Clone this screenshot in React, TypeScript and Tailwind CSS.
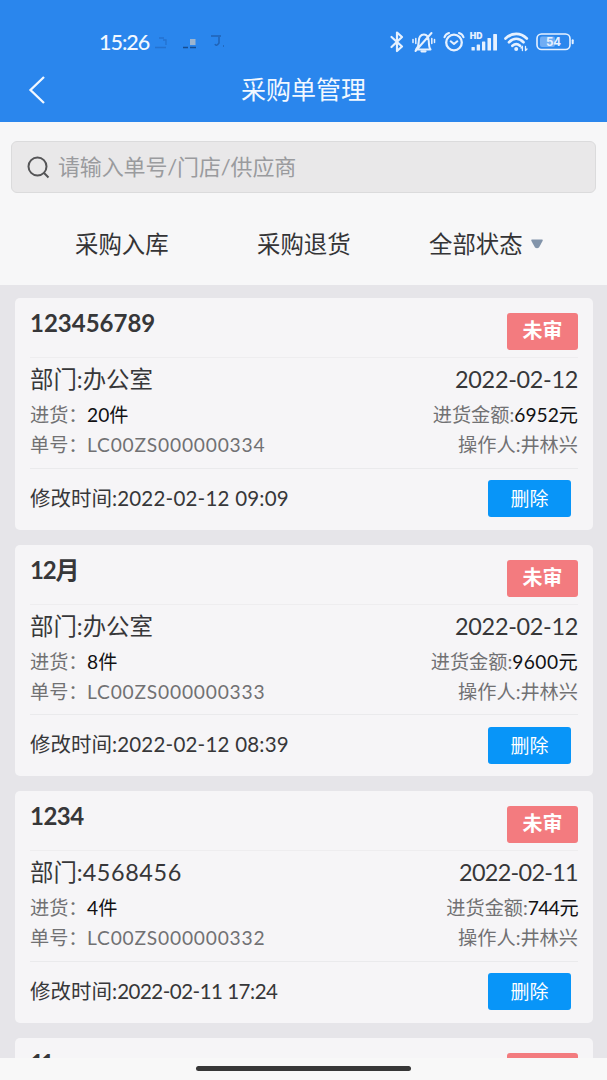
import React from "react";

type Order = {
  name: string;
  nameClass: string;
  department: string;
  departmentClass: string;
  date: string;
  dateClass: string;
  count: string;
  amount: string;
  amountClass: string;
  code: string;
  modified: string;
  modifiedClass: string;
};

const orders: Order[] = [
  { name: "123456789", nameClass: "tracking-normal", department: "办公室", departmentClass: "tracking-normal", date: "2022-02-12", dateClass: "tracking-[-0.3px]", count: "20件", amount: "6952元", amountClass: "tracking-normal", code: "LC00ZS000000334", modified: "2022-02-12 09:09", modifiedClass: "tracking-[0.22px]" },
  { name: "12月", nameClass: "tracking-[-1.2px]", department: "办公室", departmentClass: "tracking-normal", date: "2022-02-12", dateClass: "tracking-[-0.3px]", count: "8件", amount: "9600元", amountClass: "tracking-[0.4px]", code: "LC00ZS000000333", modified: "2022-02-12 08:39", modifiedClass: "tracking-[0.22px]" },
  { name: "1234", nameClass: "tracking-[-0.5px]", department: "4568456", departmentClass: "tracking-[0.6px]", date: "2022-02-11", dateClass: "tracking-[-0.7px]", count: "4件", amount: "744元", amountClass: "tracking-[-0.6px]", code: "LC00ZS000000332", modified: "2022-02-11 17:24", modifiedClass: "tracking-[-0.5px]" },
  { name: "11", nameClass: "tracking-[-3.5px]", department: "办公室", departmentClass: "tracking-normal", date: "2022-02-11", dateClass: "tracking-[-0.7px]", count: "2件", amount: "120元", amountClass: "tracking-normal", code: "LC00ZS000000331", modified: "2022-02-11 16:50", modifiedClass: "tracking-[-0.5px]" },
];

function StatusIcons() {
  return (
    <svg className="h-[26px] w-[190px]" viewBox="388 29 190 26" fill="none" stroke="#e6f1ff" strokeWidth="2" strokeLinecap="round" strokeLinejoin="round">
      <path d="M391.5 37 L402 46.5 L397 51 V32.5 L402 37 L391.5 47" strokeWidth="2.2" />
      <path d="M416 49.5 H430.5 C428.8 47.5 429 45 428.8 41.5 C428.5 36.5 426.5 34.5 424 34.5 C420.5 34.5 418.7 37.5 418.7 42 C418.7 45 418 47.5 416 49.5 M415.5 51 L431.5 33" strokeWidth="2" />
      <path d="M421.5 51.3 H425.5" strokeWidth="2.2" />
      <path d="M415.8 38.5 V43.5 M413 39.5 V42.5 M431.8 38.5 V43.5 M434.5 39.5 V42.5" strokeWidth="1.5" />
      <circle cx="454" cy="42.5" r="7.8" strokeWidth="2.3" />
      <path d="M450.7 41.3 L454 44 L457.3 41.3 M444.5 37.2 Q445.5 34 449 33 M463.5 37.2 Q462.5 34 459 33" strokeWidth="2.1" />
      <g fill="#e6f1ff" stroke="none">
        <rect x="471.5" y="47" width="3.3" height="3.5" rx="0.6" />
        <rect x="476.7" y="44.5" width="3.3" height="6" rx="0.6" />
        <rect x="482" y="41.5" width="3.3" height="9" rx="0.6" />
        <rect x="487.5" y="38" width="3.5" height="12.5" rx="0.6" />
        <rect x="493.2" y="34" width="3.8" height="16.5" rx="0.6" />
        <text x="469.8" y="39.2" fontSize="8.6" fontWeight="900" fontFamily="Inter, sans-serif">HD</text>
      </g>
      <path d="M505.5 38.5 C512 32.3 520.5 32.3 526.8 38.5 M509 42.3 C513.5 37.8 519 37.8 523.5 42.3 M512.4 45.8 C515 43.6 517.5 43.6 520 45.8" strokeWidth="2.7" />
      <circle cx="516.2" cy="49" r="2" fill="#e6f1ff" stroke="none" />
      <path d="M522.4 50.5 V46.5 M521 48 L522.4 46.5 M525.5 46.5 V50.5 M527 49 L525.5 50.5" strokeWidth="1.3" />
      <rect x="537" y="34" width="33" height="15.5" rx="4.5" strokeWidth="1.6" />
      <rect x="540" y="36.5" width="15" height="10.5" rx="2" fill="#70adf4" stroke="none" />
      <path d="M572.7 40.3 V43.3" strokeWidth="2" />
      <text x="546" y="46.2" fontSize="11.5" fontWeight="700" fontFamily="Inter, sans-serif" fill="#e6f1ff" stroke="none">54</text>
    </svg>
  );
}

function OrderCard({ order }: { order: Order }) {
  return (
    <article className="h-[231.5px] shrink-0 rounded-[5px] bg-[#f6f5f7] px-[15px] whitespace-nowrap text-[#373739]">
      <header className="flex h-[60px] items-start justify-between border-b border-[#eeedef]">
        <h2 className={"mt-[9px] text-[24px] leading-[32px] font-bold " + order.nameClass}>{order.name}</h2>
        <span className="mt-[15px] h-[37px] w-[71px] rounded-[3px] bg-[#f37b7f] text-center text-[20px] leading-[35px] font-bold text-white">未审</span>
      </header>
      <div className="h-[110.5px] border-b border-[#eaeaec] pt-[6px]">
        <div className="flex h-[36px] items-start justify-between text-[23.4px] leading-[30px]">
          <span>部门:<span className={order.departmentClass}>{order.department}</span></span>
          <span className={order.dateClass}>{order.date}</span>
        </div>
        <div className="flex h-[30px] items-center justify-between text-[19.2px] leading-[30px] text-[#717173]">
          <div className="flex">
            <span className="w-[57px] shrink-0">进货：</span>
            <span className="text-[#111113]">{order.count}</span>
          </div>
          <span>进货金额:<span className={"text-[#111113] " + order.amountClass}>{order.amount}</span></span>
        </div>
        <div className="flex h-[30px] items-center justify-between text-[19.2px] leading-[30px] text-[#717173]">
          <div className="flex">
            <span className="w-[57px] shrink-0">单号：</span>
            <span className="tracking-[0.8px]">{order.code}</span>
          </div>
          <span>操作人:井林兴</span>
        </div>
      </div>
      <footer className="flex h-[60px] items-center justify-between pr-[7px]">
        <span className="pb-[2px] text-[20.5px] leading-[30px]">修改时间:<span className={order.modifiedClass}>{order.modified}</span></span>
        <button className="h-[37px] w-[83px] rounded-[3px] bg-[#0895f8] text-[19px] leading-[35px] text-white">删除</button>
      </footer>
    </article>
  );
}

export default function App() {
  return (
    <main className="flex h-[1080px] w-[607px] flex-col overflow-hidden bg-[#f7f7f8] font-[Lato,'Noto_Sans_CJK_SC',sans-serif]">
      <header className="h-[122px] shrink-0 bg-[#2a86ed] text-[#f2f8ff]">
        <div className="flex h-[66px] items-start justify-between pt-[29px] pr-[29px] pl-[99px]">
          <div className="flex h-[26px] items-center">
            <span className="w-[54px] text-[21.5px] leading-[26px] font-medium tracking-[-1px]">15:26</span>
            <svg className="h-[20px] w-[74px]" viewBox="153 32 74 20" fill="none">
              <path d="M155 47.5h11M163 40h3v5M159 38h5" stroke="#2472cf" strokeWidth="1.3" />
              <path d="M183 47.5h5m2 0h6" stroke="#174d91" strokeWidth="1.6" />
              <path d="M190 39h5.5v6H190z" fill="#9bb4cf" />
              <path d="M211 36h10m-2 1v6q-3 4-4 1m8 2h1" stroke="#2063b5" strokeWidth="1.5" />
            </svg>
          </div>
          <StatusIcons />
        </div>
        <div className="grid h-[48px] grid-cols-[1fr_auto_1fr] items-center">
          <svg className="ml-[28px] h-[30px] w-[18px]" viewBox="0 0 18 30" fill="none" stroke="currentColor" strokeWidth="2.3">
            <path d="M16 2 L2.5 15 L16 28" />
          </svg>
          <h1 className="pb-[2px] text-[25px] leading-[36px]">采购单管理</h1>
        </div>
      </header>

      <section className="h-[163px] shrink-0 px-[11px] pt-[19px] text-[#343436]">
        <div className="flex h-[52px] items-center rounded-[6px] border-[1.5px] border-[#dbdbdc] bg-[#e9e8e9] pl-[15px]">
          <svg className="h-[24px] w-[23px]" viewBox="0 0 23 24" fill="none" stroke="#555557" strokeWidth="2">
            <circle cx="10.5" cy="11.5" r="9" />
            <path d="M16.8 17.8 L21.5 22.5" />
          </svg>
          <span className="ml-[8px] text-[22px] leading-[32px] tracking-[-0.15px] text-[#9a9b9e]">请输入单号/门店/供应商</span>
        </div>
        <nav className="flex h-[102px] items-center pl-[64px] text-[23.4px] leading-[34px]">
          <span className="w-[182px]">采购入库</span>
          <span className="w-[172px]">采购退货</span>
          <span>全部状态</span>
          <svg className="ml-[8px] h-[10px] w-[12px]" viewBox="0 0 12 10">
            <path d="M1 .5H11Q12 .5 11.7 1.7L8 8.5Q6 10 4 8.5L.3 1.7Q0 .5 1 .5Z" fill="#8294aa" />
          </svg>
        </nav>
      </section>

      <section className="flex h-[773px] shrink-0 flex-col gap-[15px] overflow-hidden bg-[#e6e5e9] pt-[13px] pr-[14px] pl-[15px]">
        {orders.map((order) => <OrderCard key={order.code} order={order} />)}
      </section>

      <footer className="flex h-[22px] shrink-0 justify-center bg-[#f8f8f8] pt-[8px]">
        <div className="h-[5px] w-[215px] rounded-full bg-[#373737]" />
      </footer>
    </main>
  );
}
